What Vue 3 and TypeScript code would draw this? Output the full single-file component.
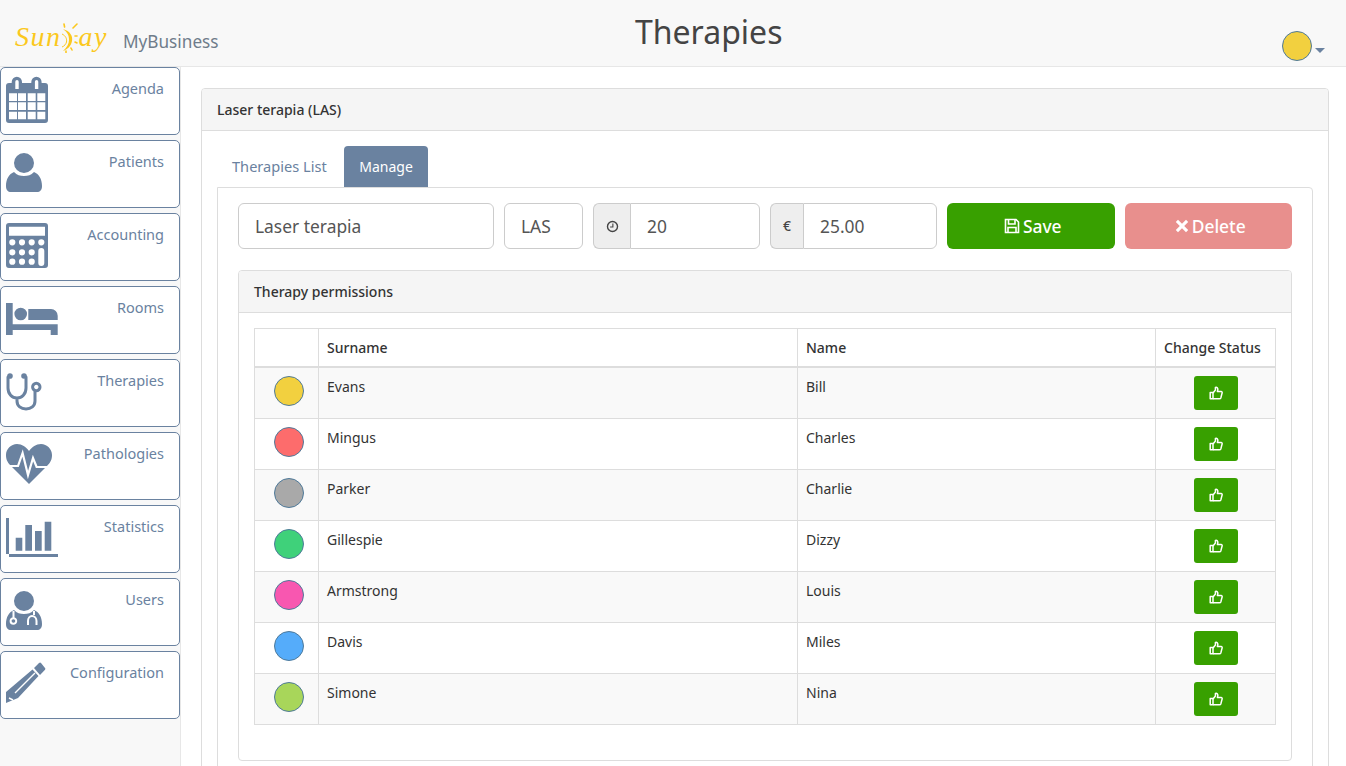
<template>
  <div class="page">
    <header class="topbar">
      <div class="brand">
        <div class="logo">
          <span>Sun</span>
          <svg class="logo-sun" viewBox="0 0 20 30" width="20" height="30">
            <path d="M2 6 C9 8 12 13 11 18 C10 23 7 26 2 28 C6 24 8 21 8 17 C8 12 6 9 2 6Z" fill="#fbc81e" />
            <path d="M1 11 C5 13 6 16 5.500 19 C5 21 3.500 23 1 24" fill="none" stroke="#fbc81e" stroke-width="1" />
            <g stroke="#fbc81e" stroke-width="1.600" stroke-linecap="round" fill="none">
              <path d="M3 1 L3.600 4" />
              <path d="M16 1 L12 5" />
              <path d="M14 13 H16" />
              <path d="M14 19 L16 20" />
              <path d="M10 25 L11 27" />
              <path d="M5 28 V29.500" />
            </g>
          </svg>
          <span>ay</span>
        </div>
        <span class="product">MyBusiness</span>
      </div>
      <h1 class="title">Therapies</h1>
      <div class="account">
        <span class="dot"></span>
        <span class="caret"></span>
      </div>
    </header>

    <div class="body">
      <nav class="sidebar">
        <a v-for="item in navItems" :key="item.label" class="nav-item">
          <svg class="nav-icon" viewBox="0 0 60 66" width="60" height="66">
            <path v-if="item.fill" :d="item.fill" fill="#6a82a0" fill-rule="evenodd" />
            <path v-if="item.line" :d="item.line" fill="none" stroke="#6a82a0" stroke-width="3" stroke-linecap="round" />
            <path v-if="item.cut" :d="item.cut" fill="none" stroke="#fff" :stroke-width="item.cutWidth || 1.6" />
          </svg>
          <span class="nav-label">{{ item.label }}</span>
        </a>
      </nav>

      <main class="content">
        <section class="panel">
          <div class="panel-heading">Laser terapia (LAS)</div>
          <div class="panel-body">
            <ul class="tabs">
              <li class="tab">Therapies List</li>
              <li class="tab active">Manage</li>
            </ul>
            <div class="tab-content">
              <form class="form-row" @submit.prevent>
                <input class="field field-name" value="Laser terapia" readonly />
                <input class="field field-code" value="LAS" readonly />
                <div class="group">
                  <span class="addon addon-time">
                    <svg viewBox="0 0 14 14" width="13" height="13" fill="none" stroke="#444" stroke-width="1.5">
                      <circle cx="7" cy="7" r="5.400" />
                      <path d="M7.400 3.800 V7.600 H4.400" stroke-width="1.200" />
                    </svg>
                  </span>
                  <input class="field" value="20" readonly />
                </div>
                <div class="group">
                  <span class="addon addon-price">€</span>
                  <input class="field" value="25.00" readonly />
                </div>
                <button type="button" class="btn save">
                  <svg viewBox="0 0 16 16" width="16" height="16" fill="none" stroke="#fff" stroke-width="1.600">
                    <path d="M1.500 1.500 H12 L14.500 4 V14.500 H1.500Z" />
                    <path d="M4.500 1.500 V6 H11 V1.500" />
                    <path d="M4 14.500 V9.500 H12 V14.500" />
                  </svg>
                  Save
                </button>
                <button type="button" class="btn delete">
                  <svg viewBox="0 0 14 14" width="14" height="14">
                    <path d="M3 0.800 L7 4.800 L11 0.800 L13.200 3 L9.200 7 L13.200 11 L11 13.200 L7 9.200 L3 13.200 L0.800 11 L4.800 7 L0.800 3Z" fill="#fff" />
                  </svg>
                  Delete
                </button>
              </form>

              <section class="panel inner">
                <div class="panel-heading">Therapy permissions</div>
                <div class="panel-body">
                  <table class="grid">
                    <thead>
                      <tr>
                        <th class="col-dot"></th>
                        <th class="col-surname">Surname</th>
                        <th class="col-name">Name</th>
                        <th class="col-status">Change Status</th>
                      </tr>
                    </thead>
                    <tbody>
                      <tr v-for="person in people" :key="person.surname">
                        <td class="cell-dot">
                          <span class="dot" :style="{ background: person.color }"></span>
                        </td>
                        <td>{{ person.surname }}</td>
                        <td>{{ person.name }}</td>
                        <td class="cell-status">
                          <button type="button" class="thumb">
                            <svg viewBox="0 0 14 14" width="14" height="14" fill="none" stroke="#fff" stroke-width="1.500" stroke-linejoin="round">
                              <path d="M1.200 6.600 H4 V12.800 H1.200Z" />
                              <path d="M4 7 L6.400 4 V1.400 C8 1 9 2 8.800 3.800 L8.400 5.400 H12 C13 5.400 13.400 6.400 13 7.400 L11.800 12 C11.600 12.600 11 12.800 10.400 12.800 H4" />
                            </svg>
                          </button>
                        </td>
                      </tr>
                    </tbody>
                  </table>
                </div>
              </section>
            </div>
          </div>
        </section>
      </main>
    </div>
  </div>
</template>

<script setup lang="ts">
type NavItem = {
  label: string
  fill?: string
  line?: string
  cut?: string
  cutWidth?: number
}

type Person = {
  surname: string
  name: string
  color: string
}

function box(x: number, y: number, w: number, h: number) {
  return `M${x} ${y}h${w}v${h}h${-w}z`
}

function disc(cx: number, cy: number, r: number) {
  return `M${cx - r} ${cy}a${r} ${r} 0 1 0 ${r * 2} 0a${r} ${r} 0 1 0 ${-r * 2} 0z`
}

const calendarCells = [25.3, 34.3, 43.7]
  .flatMap(y => [8, 17, 26.7, 36.3].map(x => box(x, y, 8, 7.6)))
  .join('')

const calcKeys = [
  [11.3, 28.3], [21, 28.3], [30.7, 28.3], [40.3, 28.3],
  [11.3, 38.3], [21, 38.3], [30.7, 38.3],
  [11.3, 47.7], [21, 47.7], [30.7, 47.7],
].map(([x, y]) => disc(x, y, 3.1)).join('')

const navItems: NavItem[] = [
  {
    label: 'Agenda',
    fill: 'M8 15h2.700v-1a5.100 5.100 0 0 1 10.300 0v1h9.300v-1a5.100 5.100 0 0 1 10.300 0v1H44a3 3 0 0 1 3 3v34a3 3 0 0 1-3 3H8a3 3 0 0 1-3-3V18a3 3 0 0 1 3-3z'
      + 'M14.300 13.700a1.700 1.700 0 0 1 3.400 0V21h-3.400zM33.900 13.700a1.700 1.700 0 0 1 3.400 0V21h-3.400z'
      + calendarCells,
  },
  {
    label: 'Patients',
    fill: disc(23, 22, 10)
      + 'M5 45C5 38 8 33 13 31C16 34 19 35 23 35C27 35 30 34 33 31C38 33 41 38 41 45C41 49 39 51 36 51H10C7 51 5 49 5 45Z',
  },
  {
    label: 'Accounting',
    fill: 'M8 9h36a3 3 0 0 1 3 3v39a3 3 0 0 1-3 3H8a3 3 0 0 1-3-3V12a3 3 0 0 1 3-3z'
      + box(8, 12.7, 36, 9)
      + calcKeys
      + 'M37.300 37a3 3 0 0 1 6 0v12a3 3 0 0 1-6 0z',
  },
  {
    label: 'Rooms',
    fill: box(5, 16, 6.7, 32)
      + box(11.7, 37.3, 45, 5.7)
      + box(49.7, 43, 7, 5)
      + disc(19.7, 27, 6.3)
      + 'M27.300 22H50a6.700 6.700 0 0 1 6.700 6.700V33H27.300z',
  },
  {
    label: 'Therapies',
    fill: disc(9, 16, 2.8) + disc(23, 16, 2.8),
    line: 'M7 17V28C7 34 11 38 16 38C21 38 25 34 25 28V17M16 38V41C16 46 20 49 25 49C30 49 34 46 34 41V31.500M39 27a3.700 3.700 0 1 1-7.400 0a3.700 3.700 0 1 1 7.400 0z',
  },
  {
    label: 'Pathologies',
    fill: 'M28 51L10 33C6 29 5 26 5 22C5 16 10 11 16 11C21 11 25 14 28 18C31 14 35 11 40 11C46 11 51 16 51 22C51 26 50 29 46 33Z',
    cut: 'M4 33H17L21.600 20L27 42L32 25L35.600 34H52',
    cutWidth: 2.2,
  },
  {
    label: 'Statistics',
    fill: box(5, 12, 3, 39) + box(5, 48, 52, 3)
      + box(14.7, 31.7, 6.6, 13) + box(24.3, 19, 6.7, 25.7)
      + box(34, 25, 6.7, 19.7) + box(43.7, 15.7, 6.6, 29),
  },
  {
    label: 'Users',
    fill: disc(23, 22, 10)
      + 'M5 45C5 38 8 33 13 31C16 34 19 35 23 35C27 35 30 34 33 31C38 33 41 38 41 45C41 49 39 51 36 51H10C7 51 5 49 5 45Z',
    cut: 'M12.500 32V39M15.200 42a2.800 2.800 0 1 1-5.600 0a2.800 2.800 0 1 1 5.600 0zM33 32V36M27 46V42C27 39 29 37 31 37C33.500 37 35.500 39 35.500 42V46',
    cutWidth: 2,
  },
  {
    label: 'Configuration',
    fill: 'M33 16L38 11C38.800 10.300 39.500 10.300 40 11L44 16C44.600 16.700 44.400 17.400 43.800 18L39 23Z'
      + 'M31.500 17.500L37.500 24L17 46L5 51V40Z',
    cut: 'M14 41L34 21M8 46L12 48',
    cutWidth: 1.4,
  },
]

const people: Person[] = [
  { surname: 'Evans', name: 'Bill', color: '#f2d03f' },
  { surname: 'Mingus', name: 'Charles', color: '#fd6c6c' },
  { surname: 'Parker', name: 'Charlie', color: '#a9a9a9' },
  { surname: 'Gillespie', name: 'Dizzy', color: '#3fd17a' },
  { surname: 'Armstrong', name: 'Louis', color: '#f857b0' },
  { surname: 'Davis', name: 'Miles', color: '#55acfa' },
  { surname: 'Simone', name: 'Nina', color: '#a8d65a' },
]
</script>

<style>
html, body {
  margin: 0;
  overflow: hidden;
}
</style>

<style scoped>
.page {
  height: 766px;
  overflow: hidden;
  display: flex;
  flex-direction: column;
  font-family: "Noto Sans", sans-serif;
  font-size: 14px;
  line-height: 20px;
  color: #333;
  background: #fff;
}

.topbar {
  flex: none;
  height: 67px;
  box-sizing: border-box;
  display: flex;
  background: #f8f8f8;
  border-bottom: 1px solid #e7e7e7;
}

.brand {
  width: 635px;
  box-sizing: border-box;
  padding: 21px 0 0 15px;
  display: flex;
  align-items: flex-start;
}

.logo {
  display: flex;
  align-items: flex-end;
  height: 32px;
  font-family: "Liberation Serif", serif;
  font-style: italic;
  font-size: 28px;
  line-height: 32px;
  letter-spacing: 1.5px;
  color: #fbc81e;
}

.logo-sun {
  margin: 0 -2px 0 -1px;
}

.product {
  margin: 11px 0 0 15px;
  font-size: 17.2px;
  color: #6f7c8a;
}

.title {
  margin: 12px 0 0;
  font-size: 32px;
  line-height: 40px;
  font-weight: 400;
  color: #444;
}

.account {
  margin: 31px 21px 0 auto;
  display: flex;
  align-items: flex-start;
  gap: 3px;
}

.dot {
  display: block;
  width: 30px;
  height: 30px;
  box-sizing: border-box;
  border: 1px solid #4f7a9a;
  border-radius: 50%;
  background: #f2d03f;
}

.caret {
  margin-top: 17px;
  border-top: 5px solid #6a82a0;
  border-left: 5px solid transparent;
  border-right: 5px solid transparent;
}

.body {
  flex: 1;
  display: flex;
  min-height: 0;
}

.sidebar {
  flex: none;
  width: 181px;
  box-sizing: border-box;
  display: flex;
  flex-direction: column;
  gap: 5px;
  background: #f8f8f8;
  border-right: 1px solid #e7e7e7;
}

.nav-item {
  width: 180px;
  height: 68px;
  box-sizing: border-box;
  display: flex;
  justify-content: space-between;
  background: #fff;
  border: 1px solid #6a82a0;
  border-radius: 5px;
  color: #6a82a0;
}

.nav-icon {
  flex: none;
}

.nav-label {
  padding: 10px 15px 0 0;
  font-size: 14.5px;
}

.content {
  flex: 1;
  min-width: 0;
  padding: 21px 17px 0 20px;
}

.panel {
  border: 1px solid #ddd;
  border-radius: 4px;
  background: #fff;
}

.panel-heading {
  height: 42px;
  box-sizing: border-box;
  padding: 11px 15px;
  background: #f5f5f5;
  border-bottom: 1px solid #ddd;
  border-radius: 3px 3px 0 0;
  font-weight: 500;
  color: #333;
}

.panel-body {
  padding: 15px;
}

.tabs {
  display: flex;
  gap: 2px;
  margin: 0;
  padding: 0;
  list-style: none;
}

.tab {
  height: 41px;
  box-sizing: border-box;
  padding: 10px 15px;
  border-radius: 4px 4px 0 0;
  font-size: 14.6px;
  color: #6a82a0;
}

.tab.active {
  padding: 11px 15.5px;
  font-size: 14px;
  background: #6a82a0;
  color: #fff;
}

.tab-content {
  padding: 15px 20px;
  border: 1px solid #ddd;
  border-radius: 0 4px 4px 4px;
}

.form-row {
  display: flex;
  gap: 10px;
  margin-bottom: 21px;
}

.field {
  display: block;
  width: 100%;
  min-width: 0;
  height: 46px;
  box-sizing: border-box;
  padding: 0 16px;
  border: 1px solid #ccc;
  border-radius: 6px;
  outline: none;
  font: 17.4px "Noto Sans", sans-serif;
  color: #555;
  background: #fff;
}

.field-name {
  flex: none;
  width: 256px;
}

.field-code {
  flex: none;
  width: 79px;
}

.group {
  flex: none;
  width: 167px;
  display: flex;
}

.group .field {
  border-radius: 0 6px 6px 0;
}

.addon {
  flex: none;
  box-sizing: border-box;
  display: flex;
  align-items: center;
  justify-content: center;
  border: 1px solid #ccc;
  border-right: none;
  border-radius: 6px 0 0 6px;
  background: #eee;
  color: #444;
}

.addon-time {
  width: 37px;
}

.addon-price {
  width: 33px;
  font-weight: 500;
}

.btn {
  flex: none;
  width: 167.500px;
  height: 46px;
  padding: 0 0 0 4px;
  display: flex;
  align-items: center;
  justify-content: center;
  gap: 3px;
  border: 1px solid transparent;
  border-radius: 6px;
  font: 500 17.4px "Noto Sans", sans-serif;
  color: #fff;
}

.save {
  background: #38a000;
}

.delete {
  background: #e88f8d;
}

.grid {
  width: 100%;
  margin-bottom: 20px;
  border-collapse: collapse;
  table-layout: fixed;
}

.grid th,
.grid td {
  box-sizing: border-box;
  padding: 8px;
  border: 1px solid #ddd;
  text-align: left;
  vertical-align: top;
}

.grid th {
  padding-top: 9px;
  border-bottom-width: 2px;
  font-weight: 500;
  white-space: nowrap;
}

.grid td {
  line-height: 22px;
}

.grid tbody tr:nth-child(odd) {
  background: #f9f9f9;
}

.col-dot {
  width: 64px;
}

.col-name {
  width: 358px;
}

.col-status {
  width: 120px;
}

.cell-dot .dot {
  margin: 0 0 0 11px;
}

.cell-status {
  text-align: center !important;
}

.thumb {
  display: inline-flex;
  align-items: center;
  justify-content: center;
  width: 44px;
  height: 34px;
  padding: 0;
  border: none;
  border-radius: 3px;
  background: #38a000;
  vertical-align: top;
}
</style>
